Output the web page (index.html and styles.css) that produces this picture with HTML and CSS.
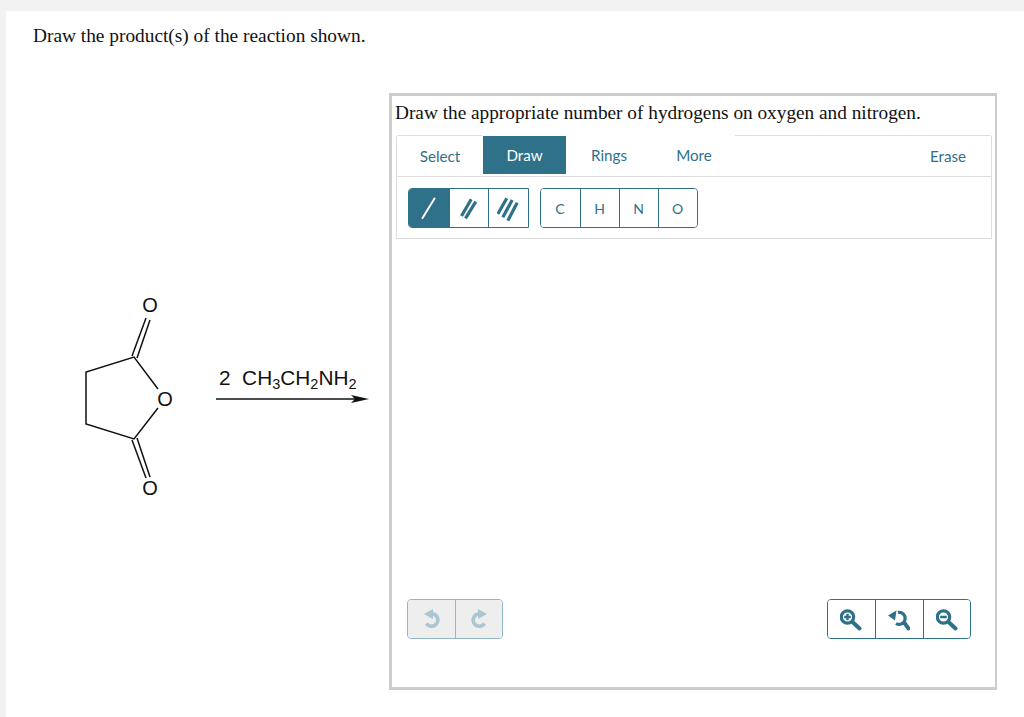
FILE: index.html
```html
<!DOCTYPE html>
<html lang="en">
<head>
    <meta charset="UTF-8">
    <meta name="viewport" content="width=device-width, initial-scale=1.0">
    <title>Draw the products</title>
    <link rel="stylesheet" href="styles.css">
</head>
<body>

<div class="page">
    <p class="question">Draw the product(s) of the reaction shown.</p>

    <div class="work">
        <svg class="scheme" width="300" height="210" viewBox="70 290 300 210">
            <g fill="none" stroke="#111" stroke-width="1.500">
                <polyline points="158,389 134,357 86,372 86,424 134,439 158,408"/>
                <line x1="132" y1="356" x2="146" y2="318"/>
                <line x1="137" y1="358" x2="150" y2="320"/>
                <line x1="132" y1="440" x2="146" y2="478"/>
                <line x1="137" y1="438" x2="150" y2="477"/>
                <line x1="216" y1="399" x2="356" y2="399"/>
            </g>
            <polygon points="351,395 369,399 351,403 355,399" fill="#111"/>
            <text class="atom" x="150" y="312">O</text>
            <text class="atom" x="165" y="406">O</text>
            <text class="atom" x="150" y="495">O</text>
            <text class="reagent" x="219" y="385">2&#160;&#160;CH<tspan class="sub" dy="4">3</tspan><tspan dy="-4">CH</tspan><tspan class="sub" dy="4">2</tspan><tspan dy="-4">NH</tspan><tspan class="sub" dy="4">2</tspan></text>
        </svg>

        <div class="sketcher">
            <p class="prompt">Draw the appropriate number of hydrogens on oxygen and nitrogen.</p>

            <div class="tabs">
                <button class="tab select">Select</button>
                <button class="tab active">Draw</button>
                <button class="tab rings">Rings</button>
                <button class="tab">More</button>
                <button class="tab erase">Erase</button>
            </div>

            <div class="tools">
                <div class="group bonds">
                    <button class="cell selected">
                        <svg width="18" height="24" viewBox="0 0 18 24"><line x1="2.500" y1="22" x2="14.500" y2="2.500"/></svg>
                    </button>
                    <button class="cell">
                        <svg width="18" height="24" viewBox="0 0 18 24"><line x1="1.500" y1="20" x2="11.200" y2="3.300"/><line x1="5.500" y1="22.300" x2="15.800" y2="5.700"/></svg>
                    </button>
                    <button class="cell">
                        <svg width="22" height="26" viewBox="0 0 22 26"><line x1="0.800" y1="19" x2="9.800" y2="3.300"/><line x1="5.800" y1="22.300" x2="15.200" y2="5"/><line x1="10.800" y1="25.700" x2="20.200" y2="7.700"/></svg>
                    </button>
                </div>
                <div class="group atoms">
                    <button class="cell">C</button>
                    <button class="cell">H</button>
                    <button class="cell">N</button>
                    <button class="cell">O</button>
                </div>
            </div>

            <div class="bottom">
                <div class="group history">
                    <button class="cell">
                        <svg width="18" height="20" viewBox="0 0 18 20"><path class="arc" d="M8.500 4.800 A6.200 6.200 0 1 1 3.500 14.500"/><polygon points="10,0 10,10 1,5"/></svg>
                    </button>
                    <button class="cell">
                        <svg width="18" height="20" viewBox="0 0 18 20"><path class="arc" d="M9.500 4.800 A6.200 6.200 0 1 0 14.500 14.500"/><polygon points="8,0 8,10 17,5"/></svg>
                    </button>
                </div>
                <div class="group zoom">
                    <button class="cell">
                        <svg width="22" height="23" viewBox="0 0 22 23"><circle cx="7.500" cy="9" r="6.200"/><line class="handle" x1="12.500" y1="14" x2="19.500" y2="20.500"/><line class="mark" x1="4.200" y1="9" x2="10.800" y2="9"/><line class="mark" x1="7.500" y1="5.700" x2="7.500" y2="12.300"/></svg>
                    </button>
                    <button class="cell">
                        <svg width="22" height="23" viewBox="0 0 22 23"><path d="M10 4.500 A6 6 0 1 1 8 15.500"/><polygon class="head" points="0,7.500 8.500,2.500 7,12.500"/><line class="handle" x1="16.500" y1="15" x2="20.500" y2="20.500"/></svg>
                    </button>
                    <button class="cell">
                        <svg width="22" height="23" viewBox="0 0 22 23"><circle cx="7.500" cy="9" r="6.200"/><line class="handle" x1="12.500" y1="14" x2="19.500" y2="20.500"/><line class="mark" x1="4.200" y1="9" x2="10.800" y2="9"/></svg>
                    </button>
                </div>
            </div>
        </div>
    </div>
</div>

</body>
</html>
```

FILE: styles.css
```css
body {
    margin: 0;
    padding: 11px 0 0 6px;
    background-color: #f2f2f2;
    font-family: 'Liberation Serif', serif;
}

.page {
    height: 706px;
    background-color: white;
    overflow: hidden;
}

.question {
    margin: 0;
    padding: 14px 0 0 27px;
    font-size: 19.350px;
    line-height: 22px;
    color: #111;
}

.work {
    display: flex;
    align-items: flex-start;
    margin-top: 46px;
}

.scheme {
    flex: none;
    margin: 197px 0 0 64px;
}

.atom {
    font-family: 'Liberation Sans', sans-serif;
    font-size: 20px;
    text-anchor: middle;
    fill: #111;
}

.reagent {
    font-family: 'Liberation Sans', sans-serif;
    font-size: 20.800px;
    fill: #111;
}

.sub {
    font-size: 14.500px;
}

.sketcher {
    box-sizing: border-box;
    width: 608px;
    height: 597px;
    margin-left: 19px;
    border: 3px solid #ccc;
    border-right-width: 2px;
    display: flex;
    flex-direction: column;
    padding: 0 3px 48px 3px;
}

.prompt {
    margin: 0;
    padding: 6px 0 0 0;
    height: 33px;
    font-size: 19.300px;
    line-height: 22px;
    color: #111;
    white-space: nowrap;
}

.tabs {
    display: flex;
    height: 42px;
    box-sizing: border-box;
    margin-left: 1px;
    border: 1px solid #ddd;
    border-radius: 3px 3px 0 0;
    border-top-color: transparent;
    background: linear-gradient(to right, #ddd 86px, transparent 86px, transparent 339px, #ddd 339px) top / 100% 1px no-repeat;
    background-origin: border-box;
    background-clip: border-box;
}

.tab {
    width: 84px;
    height: 38px;
    padding: 0;
    border: none;
    background: none;
    font-family: 'Lato', sans-serif;
    font-size: 15.200px;
    color: #2f7189;
}

.tab.select {
    width: 86px;
    padding-top: 2px;
}

.tab.rings {
    width: 86px;
}

.tab.active {
    width: 83px;
    background-color: #2f7189;
    color: white;
}

.tab.erase {
    margin-left: auto;
    margin-right: 1px;
    padding-top: 2px;
}

.tools {
    display: flex;
    gap: 11px;
    height: 62px;
    box-sizing: border-box;
    margin-left: 1px;
    padding: 11px 0 0 11px;
    border: 1px solid #ddd;
    border-top: none;
}

.group {
    display: flex;
    height: 40px;
    box-sizing: border-box;
    border: 1px solid #2f7189;
    border-radius: 4px;
    overflow: hidden;
}

.bonds {
    border-radius: 4px 0 0 4px;
}

.cell {
    width: 39px;
    padding: 0;
    border: none;
    border-left: 1px solid #2f7189;
    background-color: white;
    font-family: 'Lato', sans-serif;
    font-size: 14px;
    color: #2f7189;
    display: flex;
    align-items: center;
    justify-content: center;
}

.bonds .cell {
    width: 39.500px;
}

.cell:first-child {
    border-left: none;
}

.cell svg {
    flex: none;
    stroke: #2f7189;
    stroke-width: 3.200;
    fill: none;
}

.cell.selected {
    background-color: #2f7189;
}

.cell.selected svg {
    stroke: white;
    stroke-width: 2;
    stroke-linecap: round;
}

.bottom {
    margin-top: auto;
    display: flex;
    justify-content: space-between;
    padding: 0 21px 0 12px;
}

.history {
    border-color: #90b8c5;
}

.history .cell {
    width: 47px;
    background-color: #eee;
    border-color: #90b8c5;
}

.history svg {
    stroke: none;
    fill: #a9c6d1;
}

.history svg .arc {
    fill: none;
    stroke: #a9c6d1;
    stroke-width: 3.600;
}

.zoom .cell {
    width: 47.500px;
}

.zoom svg .handle {
    stroke-width: 4;
    stroke-linecap: round;
}

.zoom svg .mark {
    stroke-width: 2.400;
}

.zoom svg .head {
    fill: #2f7189;
    stroke: none;
}
```
